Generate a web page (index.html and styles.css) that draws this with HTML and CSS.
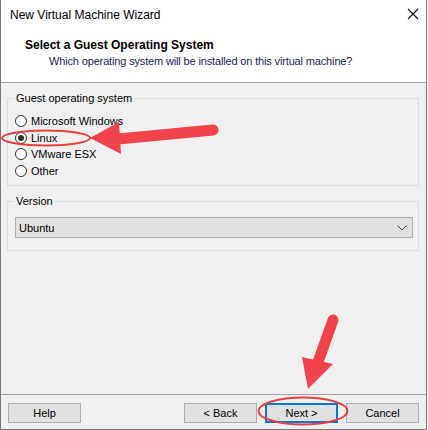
FILE: index.html
```html
<!DOCTYPE html>
<html lang="en">
<head>
    <meta charset="UTF-8">
    <title>New Virtual Machine Wizard</title>
    <link rel="stylesheet" href="styles.css">
</head>
<body>

    <div class="window">
        <div class="titlebar">
            <span class="title">New Virtual Machine Wizard</span>
            <svg class="close" width="12" height="12" viewBox="0 0 12 12">
                <path d="M1 1 L11 11 M11 1 L1 11" stroke="#111" stroke-width="1.1" fill="none"/>
            </svg>
        </div>

        <div class="header">
            <h1>Select a Guest Operating System</h1>
            <p>Which operating system will be installed on this virtual machine?</p>
        </div>

        <div class="content">
            <fieldset class="group">
                <legend>Guest operating system</legend>
                <div class="radio-row"><span class="radio"></span>Microsoft Windows</div>
                <div class="radio-row"><span class="radio checked"></span>Linux</div>
                <div class="radio-row"><span class="radio"></span>VMware ESX</div>
                <div class="radio-row"><span class="radio"></span>Other</div>
            </fieldset>

            <fieldset class="group version">
                <legend>Version</legend>
                <div class="select">
                    <span>Ubuntu</span>
                    <svg width="10" height="6" viewBox="0 0 10 6">
                        <path d="M0.5 0.5 L5 5 L9.5 0.5" stroke="#444" stroke-width="1" fill="none"/>
                    </svg>
                </div>
            </fieldset>
        </div>

        <div class="footer">
            <button>Help</button>
            <div class="spacer"></div>
            <button>&lt; Back</button>
            <button class="default">Next &gt;</button>
            <button>Cancel</button>
        </div>
    </div>

    <!-- red annotations drawn over the dialog -->
    <svg class="marks" width="428" height="430" viewBox="0 0 428 430">
        <ellipse cx="46" cy="138" rx="44" ry="7.5" stroke="#e8403f" stroke-width="2" fill="none"/>
        <line x1="213" y1="130" x2="118" y2="139" stroke="#f2434a" stroke-width="11" stroke-linecap="round"/>
        <polygon points="90,138 119,122 121,154" fill="#f2434a"/>

        <ellipse cx="303" cy="411" rx="44.5" ry="13.5" stroke="#e8403f" stroke-width="2" fill="none"/>
        <line x1="333" y1="320" x2="318" y2="362" stroke="#f2434a" stroke-width="11" stroke-linecap="round"/>
        <polygon points="302,357 333,364 308,389" fill="#f2434a"/>
    </svg>

</body>
</html>
```

FILE: styles.css
```css
body {
    margin: 0;
    background: white;
    font-family: 'Liberation Sans', Arial, sans-serif;
    font-size: 11px;
    color: #000;
}

.window {
    width: 427px;
    height: 430px;
    box-sizing: border-box;
    border-left: 1px solid #7a7a7a;
    border-right: 1px solid #7a7a7a;
    border-bottom: 1px solid #7a7a7a;
    display: flex;
    flex-direction: column;
}

.titlebar {
    height: 29px;
    display: flex;
    align-items: center;
    justify-content: space-between;
    padding: 0 7px 0 9px;
    background: white;
}

.title {
    font-size: 12px;
    line-height: 16px;
    margin-top: 1px;
}

.close {
    margin-top: -1px;
}

.header {
    background: white;
    height: 54px;
    box-sizing: border-box;
    padding: 8px 0 0 24px;
    border-bottom: 1px solid #a0a0a0;
}

.header h1 {
    margin: 0;
    font-size: 12px;
    font-weight: bold;
    line-height: 16px;
}

.header p {
    margin: 0;
    padding-left: 24px;
    line-height: 16px;
    letter-spacing: -0.15px;
    color: #1b1b55;
}

.content {
    flex: 1;
    background: #f0f0f0;
    padding: 7px 7px 0 6px;
}

.group {
    margin: 0;
    padding: 7px 0 6px 7px;
    border: 1px solid #dcdcdc;
    min-width: 0;
}

.group legend {
    padding: 0 2px;
    margin-left: -1px;
    line-height: 16px;
}

.radio-row {
    height: 16.5px;
    display: flex;
    align-items: center;
    gap: 4px;
}

.radio {
    width: 12px;
    height: 12px;
    box-sizing: border-box;
    border: 1px solid #333;
    border-radius: 50%;
    background: white;
    display: flex;
    align-items: center;
    justify-content: center;
}

.radio.checked::after {
    content: "";
    width: 6px;
    height: 6px;
    border-radius: 50%;
    background: #333;
}

.version {
    margin-top: 7px;
    padding: 8px 5px 12px 7px;
}

.select {
    height: 21px;
    box-sizing: border-box;
    border: 1px solid #adadad;
    background: #e1e1e1;
    display: flex;
    align-items: center;
    justify-content: space-between;
    padding: 0 5px 0 3px;
}

.footer {
    background: #f0f0f0;
    border-top: 1px solid #a0a0a0;
    padding: 8px 7px 6px 7px;
    display: flex;
    gap: 8px;
}

.spacer {
    flex: 1;
}

button {
    width: 73px;
    height: 20px;
    padding: 0;
    font-family: 'Liberation Sans', Arial, sans-serif;
    font-size: 11px;
    color: #000;
    background: #e1e1e1;
    border: 1px solid #adadad;
}

button.default {
    border-color: #0078d7;
    box-shadow: inset 0 0 0 1px #0078d7;
}

.marks {
    position: absolute;
    top: 0;
    left: 0;
    pointer-events: none;
}
```
